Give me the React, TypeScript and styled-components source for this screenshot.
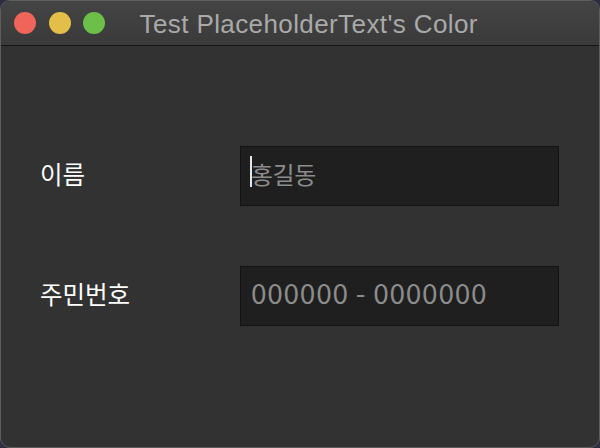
import styled, { createGlobalStyle } from "styled-components";

const GlobalStyle = createGlobalStyle`
  html, body {
    margin: 0;
    padding: 0;
    width: 600px;
    height: 448px;
    overflow: hidden;
    background: #2d2f3f;
  }
  * { box-sizing: border-box; }
`;

const Window = styled.div`
  width: 600px;
  height: 448px;
  display: flex;
  flex-direction: column;
  border: 1px solid #5e5e5e;
  border-radius: 10px;
  overflow: hidden;
  background: #323232;
  font-family: "Noto Sans CJK KR", "Noto Sans", sans-serif;
`;

const TitleBar = styled.div`
  height: 45px;
  flex-shrink: 0;
  display: flex;
  align-items: center;
  padding-left: 13px;
  background: linear-gradient(#444444, #3a3a3a);
  border-bottom: 1px solid #161616;
`;

const Light = styled.span<{ color: string }>`
  width: 22px;
  height: 22px;
  border-radius: 50%;
  background: ${(p) => p.color};
  margin-right: 12.5px;
`;

const Title = styled.div`
  margin-left: 22px;
  margin-top: 3px;
  color: #a9a9a9;
  font-family: "Liberation Sans", Arial, sans-serif;
  font-size: 26px;
  letter-spacing: 0.4px;
`;

const Body = styled.div`
  flex: 1;
  display: flex;
  flex-direction: column;
  gap: 60px;
  padding: 100px 0 0 39px;
`;

const Row = styled.div`
  display: flex;
  align-items: center;
  height: 60px;
`;

const Label = styled.div`
  width: 200px;
  color: #ffffff;
  font-size: 24.5px;
  margin-bottom: 6px;
`;

const Field = styled.div`
  position: relative;
  width: 319px;
  height: 60px;
  background: #1f1f1f;
  border: 1px solid #131313;
  display: flex;
  align-items: center;
  padding-left: 10px;
`;

const Placeholder = styled.span<{ size: number; spacing: number; lift: number }>`
  color: #8c8c8c;
  font-size: ${(p) => p.size}px;
  letter-spacing: ${(p) => p.spacing}px;
  margin-bottom: ${(p) => p.lift}px;
  font-family: "Noto Sans CJK KR", "Noto Sans", sans-serif;
`;

const Caret = styled.span`
  position: absolute;
  left: 9px;
  top: 9px;
  width: 2px;
  height: 31px;
  background: #e6e6e6;
`;

export default function App() {
  return (
    <>
      <GlobalStyle />
      <Window>
        <TitleBar>
          <Light color="#f0645a" />
          <Light color="#e3bf49" />
          <Light color="#6cc04a" />
          <Title>Test PlaceholderText's Color</Title>
        </TitleBar>
        <Body>
          <Row>
            <Label>이름</Label>
            <Field>
              <Caret />
              <Placeholder size={24} spacing={-0.5} lift={6}>
                홍길동
              </Placeholder>
            </Field>
          </Row>
          <Row>
            <Label>주민번호</Label>
            <Field>
              <Placeholder size={28} spacing={0.75} lift={9}>
                000000 - 0000000
              </Placeholder>
            </Field>
          </Row>
        </Body>
      </Window>
    </>
  );
}
